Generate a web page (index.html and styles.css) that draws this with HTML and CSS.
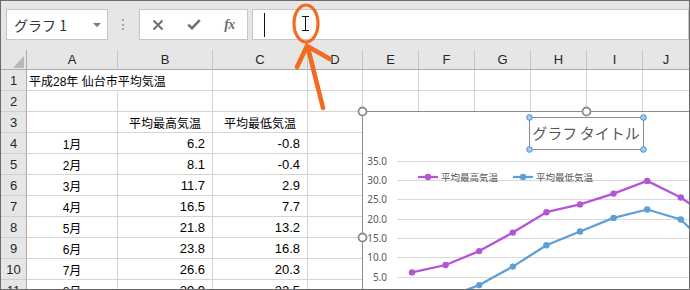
FILE: index.html
```html
<!DOCTYPE html>
<html lang="ja">
<head>
<meta charset="utf-8">
<title>Excel</title>
<link rel="stylesheet" href="styles.css">
</head>
<body>
<div class="frame">
  <div class="toolbar">
    <div class="namebox"><span class="name">グラフ 1</span><span class="dd"></span></div>
    <div class="grip"><i></i><i></i><i></i></div>
    <div class="fbtns">
      <span class="slot"><svg width="12" height="12" viewBox="0 0 12 12"><path d="M1.5 1.5L10.5 10.5M10.5 1.5L1.5 10.5" stroke="#707070" stroke-width="2" fill="none"/></svg></span>
      <span class="slot"><svg width="14" height="11" viewBox="0 0 14 11"><path d="M1.2 5.6L5 9.2L12.8 1.2" stroke="#707070" stroke-width="2.6" fill="none"/></svg></span>
      <span class="slot fx">fx</span>
    </div>
    <div class="finput"><span class="caret"></span></div>
  </div>

  <div class="sheet">
    <div class="c corner"><span class="tri"></span></div>
    <div class="c ch">A</div><div class="c ch">B</div><div class="c ch">C</div><div class="c ch">D</div><div class="c ch">E</div><div class="c ch">F</div><div class="c ch">G</div><div class="c ch">H</div><div class="c ch">I</div><div class="c ch last">J</div>

    <div class="c rh">1</div><div class="c l nb">平成28年 仙台市平均気温</div><div class="c"></div><div class="c"></div><div class="c"></div><div class="c"></div><div class="c"></div><div class="c"></div><div class="c"></div><div class="c"></div><div class="c last"></div>
    <div class="c rh">2</div><div class="c"></div><div class="c"></div><div class="c"></div><div class="c"></div><div class="c"></div><div class="c"></div><div class="c"></div><div class="c"></div><div class="c"></div><div class="c last"></div>
    <div class="c rh">3</div><div class="c"></div><div class="c m">平均最高気温</div><div class="c m">平均最低気温</div><div class="c"></div><div class="c"></div><div class="c"></div><div class="c"></div><div class="c"></div><div class="c"></div><div class="c last"></div>
    <div class="c rh">4</div><div class="c m">1月</div><div class="c n">6.2</div><div class="c n">-0.8</div><div class="c"></div><div class="c"></div><div class="c"></div><div class="c"></div><div class="c"></div><div class="c"></div><div class="c last"></div>
    <div class="c rh">5</div><div class="c m">2月</div><div class="c n">8.1</div><div class="c n">-0.4</div><div class="c"></div><div class="c"></div><div class="c"></div><div class="c"></div><div class="c"></div><div class="c"></div><div class="c last"></div>
    <div class="c rh">6</div><div class="c m">3月</div><div class="c n">11.7</div><div class="c n">2.9</div><div class="c"></div><div class="c"></div><div class="c"></div><div class="c"></div><div class="c"></div><div class="c"></div><div class="c last"></div>
    <div class="c rh">7</div><div class="c m">4月</div><div class="c n">16.5</div><div class="c n">7.7</div><div class="c"></div><div class="c"></div><div class="c"></div><div class="c"></div><div class="c"></div><div class="c"></div><div class="c last"></div>
    <div class="c rh">8</div><div class="c m">5月</div><div class="c n">21.8</div><div class="c n">13.2</div><div class="c"></div><div class="c"></div><div class="c"></div><div class="c"></div><div class="c"></div><div class="c"></div><div class="c last"></div>
    <div class="c rh">9</div><div class="c m">6月</div><div class="c n">23.8</div><div class="c n">16.8</div><div class="c"></div><div class="c"></div><div class="c"></div><div class="c"></div><div class="c"></div><div class="c"></div><div class="c last"></div>
    <div class="c rh">10</div><div class="c m">7月</div><div class="c n">26.6</div><div class="c n">20.3</div><div class="c"></div><div class="c"></div><div class="c"></div><div class="c"></div><div class="c"></div><div class="c"></div><div class="c last"></div>
    <div class="c rh">11</div><div class="c m">8月</div><div class="c n">29.9</div><div class="c n">22.5</div><div class="c"></div><div class="c"></div><div class="c"></div><div class="c"></div><div class="c"></div><div class="c"></div><div class="c last"></div>
  </div>

  <svg class="chart" width="460" height="260" viewBox="0 0 460 260">
    <rect x="0.5" y="0.5" width="470" height="300" fill="#fff" stroke="#8c8c8c"/>
    <g stroke="#d9d9d9" stroke-width="1">
      <path d="M35 50.5H460M35 69.5H460M35 88.5H460M35 108.5H460M35 127.5H460M35 146.5H460M35 166.5H460M35 185.5H460"/>
    </g>
    <g class="ylab" text-anchor="end">
      <text x="25" y="54">35.0</text>
      <text x="25" y="73">30.0</text>
      <text x="25" y="92">25.0</text>
      <text x="25" y="112">20.0</text>
      <text x="25" y="131">15.0</text>
      <text x="25" y="150">10.0</text>
      <text x="25" y="170">5.0</text>
    </g>
    <polyline fill="none" stroke="#b455d6" stroke-width="2.3" stroke-linejoin="round" points="50,161.4 83.6,154 117.2,140.1 150.8,121.6 184.4,101.2 218,93.4 251.6,82.6 285.2,69.9 318.8,86.5 352.4,109.6"/>
    <polyline fill="none" stroke="#5f9fd6" stroke-width="2.3" stroke-linejoin="round" points="50,188.4 83.6,186.8 117.2,174.1 150.8,155.6 184.4,134.3 218,120.5 251.6,106.9 285.2,98.5 318.8,108.5 352.4,141.3"/>
    <g fill="#b455d6">
      <circle cx="50" cy="161.4" r="3.2"/><circle cx="83.6" cy="154" r="3.2"/><circle cx="117.2" cy="140.1" r="3.2"/><circle cx="150.8" cy="121.6" r="3.2"/><circle cx="184.4" cy="101.2" r="3.2"/><circle cx="218" cy="93.4" r="3.2"/><circle cx="251.6" cy="82.6" r="3.2"/><circle cx="285.2" cy="69.9" r="3.2"/><circle cx="318.8" cy="86.5" r="3.2"/>
    </g>
    <g fill="#5f9fd6">
      <circle cx="50" cy="188.4" r="3.2"/><circle cx="83.6" cy="186.8" r="3.2"/><circle cx="117.2" cy="174.1" r="3.2"/><circle cx="150.8" cy="155.6" r="3.2"/><circle cx="184.4" cy="134.3" r="3.2"/><circle cx="218" cy="120.5" r="3.2"/><circle cx="251.6" cy="106.9" r="3.2"/><circle cx="285.2" cy="98.5" r="3.2"/><circle cx="318.8" cy="108.5" r="3.2"/>
    </g>
    <path d="M56 66H76" stroke="#b455d6" stroke-width="2.3"/>
    <circle cx="66" cy="66" r="3.2" fill="#b455d6"/>
    <text class="leg" x="79" y="69.5">平均最高気温</text>
    <path d="M151 66H171" stroke="#5f9fd6" stroke-width="2.3"/>
    <circle cx="161" cy="66" r="3.2" fill="#5f9fd6"/>
    <text class="leg" x="174" y="69.5">平均最低気温</text>
    <rect x="167.5" y="6.5" width="114" height="32" fill="none" stroke="#8c8c8c"/>
    <text class="ttl" x="224" y="28">グラフ タイトル</text>
    <g fill="#a9cbee" stroke="#3d8bd8" stroke-width="1">
      <circle cx="167.5" cy="6.5" r="2.8"/><circle cx="281.5" cy="6.5" r="2.8"/><circle cx="167.5" cy="38.5" r="2.8"/><circle cx="281.5" cy="38.5" r="2.8"/>
    </g>
    <g fill="#fff" stroke="#8c8c8c" stroke-width="1.8">
      <circle cx="0.5" cy="0.5" r="4"/><circle cx="224.5" cy="0.5" r="4"/><circle cx="0.5" cy="126.5" r="4"/>
    </g>
  </svg>

  <svg class="annot" width="690" height="290" viewBox="0 0 690 290">
    <path d="M302 16.5H309M305.5 16.5V30.5M302 30.5H309" stroke="#111" stroke-width="1" fill="none"/>
    <ellipse cx="306" cy="23.5" rx="12" ry="18.5" fill="none" stroke="#f26b21" stroke-width="3.2"/>
    <path d="M323 108L308 48" stroke="#f26b21" stroke-width="4.6" stroke-linecap="round" fill="none"/>
    <path d="M297 67L307 46L330 59" stroke="#f26b21" stroke-width="4.6" stroke-linecap="round" stroke-linejoin="miter" fill="none"/>
  </svg>
</div>
</body>
</html>
```

FILE: styles.css
```css
* { box-sizing: border-box; }
html, body { margin: 0; padding: 0; }
body {
  background: #fff;
  font-family: "Liberation Sans", "Noto Sans CJK JP", sans-serif;
}
.frame {
  position: relative;
  width: 690px;
  height: 290px;
  border: 1px solid #6b6b6b;
  overflow: hidden;
  background: #fff;
}

/* toolbar */
.toolbar {
  height: 49px;
  background: #e6e6e6;
  display: flex;
  align-items: flex-start;
  padding-top: 8px;
}
.namebox {
  margin-left: 5px;
  width: 102px;
  height: 31px;
  background: #fff;
  border: 1px solid #c6c6c6;
  display: flex;
  align-items: center;
  justify-content: space-between;
  padding: 0 6px 0 7px;
  font-family: "Noto Sans CJK JP", sans-serif;
  font-size: 14px;
  color: #333;
}
.dd {
  width: 0;
  height: 0;
  border-left: 4px solid transparent;
  border-right: 4px solid transparent;
  border-top: 4px solid #7a7a7a;
  margin-top: 1px;
}
.grip {
  margin-left: 14px;
  margin-top: 10px;
  display: flex;
  flex-direction: column;
  gap: 2.5px;
}
.grip i {
  display: block;
  width: 2px;
  height: 2px;
  background: #a6a6a6;
}
.fbtns {
  margin-left: 15px;
  width: 109px;
  height: 31px;
  background: #fff;
  border: 1px solid #c6c6c6;
  display: flex;
  align-items: center;
}
.slot {
  width: 36px;
  display: flex;
  justify-content: center;
  align-items: center;
}
.slot svg { display: block; }
.fx {
  width: 35px;
  font-family: "Liberation Serif", serif;
  font-style: italic;
  font-weight: bold;
  font-size: 14px;
  color: #6f6f6f;
  letter-spacing: -0.5px;
}
.finput {
  margin-left: 4px;
  flex: 1;
  height: 31px;
  background: #fff;
  border: 1px solid #c6c6c6;
}
.caret {
  display: block;
  width: 1px;
  height: 24px;
  background: #111;
  margin: 3px 0 0 11px;
}

/* sheet */
.sheet {
  display: grid;
  grid-template-columns: 26px 91px 95px 95px 55px 56px 56px 56px 56px 56px 1fr;
  grid-template-rows: 20px;
  grid-auto-rows: 21px;
}
.c {
  border-right: 1px solid #d4d4d4;
  border-bottom: 1px solid #d4d4d4;
  display: flex;
  align-items: center;
  font-size: 12px;
  color: #000;
  white-space: nowrap;
  min-width: 0;
}
.c.last { border-right: none; }
.corner {
  background: #e6e6e6;
  border-right-color: #ababab;
  border-bottom-color: #ababab;
  align-items: flex-end;
  justify-content: flex-end;
  padding: 0 2px 1px 0;
}
.tri {
  width: 0;
  height: 0;
  border-left: 11px solid transparent;
  border-bottom: 12px solid #b8b8b8;
}
.ch {
  background: #e6e6e6;
  border-right-color: #c6c6c6;
  border-bottom-color: #ababab;
  justify-content: center;
  font-size: 13px;
  color: #262626;
}
.rh {
  background: #e6e6e6;
  border-right-color: #ababab;
  border-bottom-color: #cfcfcf;
  justify-content: center;
  font-size: 13px;
  color: #262626;
}
.l { padding-left: 2px; }
.nb { border-right-color: transparent; }
.m { justify-content: center; }
.n {
  justify-content: flex-end;
  padding-right: 7px;
  font-size: 13px;
}

/* chart */
.chart {
  position: absolute;
  left: 361px;
  top: 110px;
  overflow: visible;
}
.ylab text {
  font-family: "Noto Sans", sans-serif;
  font-size: 10px;
  fill: #595959;
}
.leg {
  font-family: "Noto Sans CJK JP", sans-serif;
  font-size: 9.5px;
  fill: #595959;
}
.ttl {
  font-family: "Noto Sans CJK JP", sans-serif;
  font-size: 15px;
  fill: #595959;
  text-anchor: middle;
  word-spacing: -1px;
}

/* annotation overlay */
.annot {
  position: absolute;
  left: -1px;
  top: -1px;
  pointer-events: none;
}
```
